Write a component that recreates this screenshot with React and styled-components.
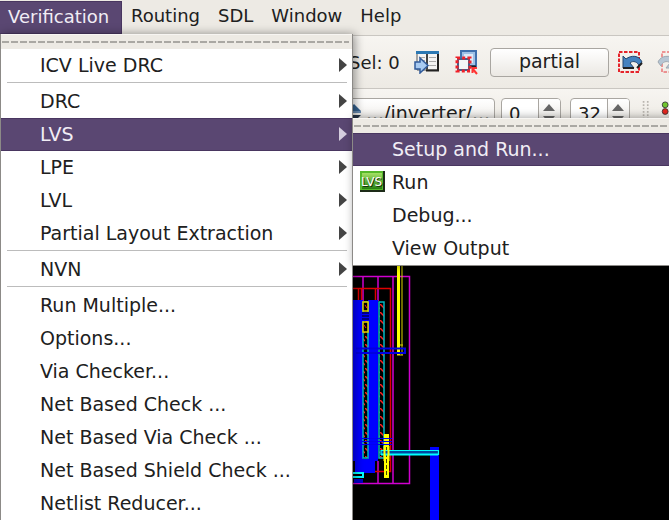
import React from "react";
import styled, { createGlobalStyle, css } from "styled-components";

const GlobalStyle = createGlobalStyle`
  * { box-sizing: border-box; }
  html, body { margin: 0; height: 100%; overflow: hidden; }
  body, button, input {
    font-family: "DejaVu Sans", sans-serif;
    font-size: 19px;
    color: #202020;
  }
`;

const purple = "#5a4772";

const Shell = styled.div`
  display: flex;
  flex-direction: column;
  height: 100vh;
  overflow: hidden;
  background: #edeae4;
`;

const MenuBar = styled.nav`
  position: relative;
  z-index: 2;
  display: flex;
  flex: none;
  height: 35px;
  padding-top: 1px;
  background: #edeae4;
`;

const MenuTitle = styled.button`
  height: 33px;
  padding: 0 9px 4px;
  border: 0;
  background: transparent;
  font-size: 18px;
  text-align: left;

  ${(p) =>
    p.$open &&
    css`
      min-width: 122px;
      padding: 0 8px 3px;
      border: 1px solid #493660;
      border-left: 0;
      background: ${purple};
      color: #f1edf5;
    `}
`;

const popup = css`
  position: absolute;
  margin: 0;
  padding: 0;
  list-style: none;
  background: #fff;
  border: 1px solid #8c8a87;
  border-top: 0;
  box-shadow: 2px 0 9px rgba(0, 0, 0, 0.4);
`;

const Menu = styled.ul`
  ${popup}
  top: 34px;
  left: 0;
  width: 353px;
`;

const SubMenu = styled.ul`
  ${popup}
  top: 0;
  left: 100%;
  width: 330px;
  z-index: 1;
`;

const TearOff = styled.li`
  display: flex;
  align-items: center;
  height: 15px;
  padding: 0 3px 0 1px;
  background: #edeae4;
  border-top: 1px solid #f7f5f2;

  &::before {
    content: "";
    flex: 1;
    height: 2px;
    background: repeating-linear-gradient(90deg, #aaa8a3 0 7px, #edeae4 7px 9px);
  }
`;

const Entry = styled.li`
  position: relative;
  height: 33px;
`;

const EntryButton = styled.button`
  display: flex;
  align-items: center;
  width: 100%;
  height: 33px;
  padding: 0 5px 2px 7px;
  border: 1px solid ${(p) => (p.$active ? "#493660" : "transparent")};
  border-width: 1px 0;
  background: ${(p) => (p.$active ? purple : "transparent")};
  color: ${(p) => (p.$active ? "#f1edf5" : "#202020")};
  text-align: left;
  white-space: nowrap;
`;

const IconSlot = styled.span`
  display: flex;
  width: 32px;
  flex: none;
`;

const Label = styled.span`
  flex: 1;
`;

const Separator = styled.li`
  height: 3px;
  margin: 0 5px 0 6px;
  border-top: 1px solid #bcbcbc;
`;

const ToolBar = styled.div`
  display: flex;
  flex: none;
  align-items: ${(p) => (p.$second ? "flex-start" : "center")};
  height: ${(p) => (p.$second ? "37px" : "53px")};
  padding: ${(p) => (p.$second ? "9px 0 0 346px" : "0 0 0 349px")};
  border-top: 1px solid #c9c6c1;
  background: linear-gradient(#f7f5f1, #edeae4);
  white-space: nowrap;
  overflow: hidden;
`;

const Selection = styled.span`
  width: 65px;
  flex: none;
  font-size: 18px;
`;

const ToolButton = styled.button`
  display: flex;
  flex: none;
  width: ${(p) => p.$width};
  padding: 0;
  border: 0;
  background: transparent;
`;

const PushButton = styled.button`
  flex: none;
  width: 119px;
  height: 29px;
  margin-right: 9px;
  padding: 0 0 2px;
  border: 1px solid #a9a6a1;
  border-radius: 4px;
  background: linear-gradient(#fff, #ebe8e3);
`;

const PathButton = styled.button`
  display: flex;
  align-items: center;
  flex: none;
  width: 149px;
  height: 30px;
  margin-right: 6px;
  padding: 0 0 0 3px;
  gap: 5px;
  border: 1px solid #a9a6a1;
  border-radius: 4px;
  background: linear-gradient(#fff, #ebe8e3);
`;

const Spin = styled.label`
  display: flex;
  flex: none;
  width: 60px;
  height: 30px;
  margin-right: 9px;
  border: 1px solid #a9a6a1;
  border-radius: 4px;
  background: #fff;
  overflow: hidden;
`;

const SpinInput = styled.input`
  width: 36px;
  height: 28px;
  padding: 0 0 0 7px;
  border: 0;
  background: transparent;
  font-size: 18px;
`;

const SpinButton = styled.button`
  display: flex;
  justify-content: center;
  flex: 1;
  padding: 4px 2px 0 0;
  border: 0;
  border-left: 1px solid #a9a6a1;
  background: linear-gradient(#fff, #e6e3de);
`;

const Canvas = styled.main`
  flex: 1;
  min-height: 0;
  background: #000;
  overflow: hidden;
`;

const Drawing = styled.svg`
  display: block;
`;

const Arrow = ({ light }) => (
  <svg width="8" height="14" viewBox="0 0 8 14" aria-hidden="true">
    <path d="M0 0 8 7 0 14Z" fill={light ? "#d5cede" : "#444"} />
  </svg>
);

const LvsIcon = () => (
  <svg width="25" height="21" viewBox="0 0 25 21" aria-hidden="true">
    <defs>
      <linearGradient id="lvs" x2="0" y2="1">
        <stop stopColor="#a4e065" />
        <stop offset="1" stopColor="#287f12" />
      </linearGradient>
    </defs>
    <path d="M0 0H25V21H0Z" fill="#1d2b18" />
    <path d="M0 0H23V19H0Z" fill="#55b82b" />
    <path d="M2 2H22V18H2Z" fill="url(#lvs)" />
    <text x="2" y="16" fontSize="12" fill="#123508">LVS</text>
    <text x="1" y="15" fontSize="12" fill="#fff">LVS</text>
  </svg>
);

const TableIcon = () => (
  <svg width="26" height="24" viewBox="0 0 26 24" aria-hidden="true">
    <path d="M3 2H24V20H3Z" fill="#f4f4f4" stroke="#555" strokeWidth="1" />
    <path d="M24 3V20.500H12" fill="none" stroke="#222" strokeWidth="2" />
    <path d="M2 1H25V4H2Z" fill="#2b78b4" />
    <path d="M13 4V20" stroke="#444" strokeWidth="2" />
    <path d="M5 7.5H11M5 10.5H11M15 7.5H22M15 11.5H22M15 15.5H22" stroke="#aaa" />
    <path d="M1 12H6V8L14 15.500 6 23V19H1Z" fill="#a9cbf1" stroke="#315b9a" strokeWidth="1.500" />
  </svg>
);

const CopyIcon = () => (
  <svg width="24" height="25" viewBox="0 0 24 25" aria-hidden="true">
    <path d="M6 1H21V16H6Z" fill="#9fc1e6" stroke="#3f70ae" strokeWidth="2" />
    <path d="M9 4H18V13H9Z" fill="#dce9f7" />
    <path d="M21 16.500H13" stroke="#222" strokeWidth="2" />
    <path d="M3 9H14V20H3Z" fill="#f4f5f7" stroke="#41618f" strokeWidth="2" />
    <path d="M2 8H15V21H2Z" fill="none" stroke="#f02028" strokeWidth="3" strokeDasharray="3 2.200" />
    <path d="M17 18H22M17.500 18V23M17 18 22 24" fill="none" stroke="#f33" strokeWidth="2" />
  </svg>
);

const UndoIcon = () => (
  <svg width="26" height="23" viewBox="0 0 26 23" aria-hidden="true">
    <path d="M1 1H21V21H1Z" fill="none" stroke="#e5242b" strokeWidth="2" strokeDasharray="3.500 1.500" />
    <path d="M5 5 8 8C13 4 21 4 24 11L21 15C20 11 15 9 12 12L16 17H5Z" fill="#4582bf" stroke="#24466f" />
    <path d="M5 17H16M24 12 19 17" stroke="#222" strokeWidth="2" fill="none" />
  </svg>
);

const RedoIcon = () => (
  <svg width="25" height="23" viewBox="0 0 25 23" opacity=".45" aria-hidden="true">
    <path d="M5 1H25V21H5Z" fill="none" stroke="#e5242b" strokeWidth="2" strokeDasharray="3.500 1.500" />
    <path d="M22 5 18 8C13 4 4 4 1 11L4 15C5 11 10 9 13 12L9 17H22Z" fill="#6f94ba" stroke="#3b526b" />
  </svg>
);

const LayerIcon = () => (
  <svg width="11" height="19" viewBox="0 0 11 19" aria-hidden="true">
    <path d="M4 0 11 7H-3Z" fill="#35618f" />
    <path d="M-3 11H11L4 18Z" fill="#28384c" />
    <path d="M-3 7H11V9H-3Z" fill="#6a8db2" />
  </svg>
);

const GripIcon = () => (
  <svg width="26" height="26" viewBox="0 0 26 26" aria-hidden="true">
    <path d="M5.500 1V26M10.500 1V26" stroke="#b9b5af" strokeWidth="2" strokeDasharray="2 2" />
  </svg>
);

const LightsIcon = () => (
  <svg width="10" height="22" viewBox="0 0 10 22" aria-hidden="true">
    <circle cx="5" cy="6" r="3.500" fill="#70c52e" stroke="#333" />
    <circle cx="5" cy="14" r="3.500" fill="#e5261f" stroke="#333" />
  </svg>
);

function LayoutDrawing() {
  return (
    <Drawing width="669" height="395" viewBox="0 125 669 395" role="img" aria-label="Inverter layout">
      <defs>
        <pattern id="hatch" width="5" height="8" patternUnits="userSpaceOnUse">
          <rect width="5" height="8" fill="#000" />
          <path d="M0 0 5 5" stroke="#ff2020" strokeWidth="1.500" />
        </pattern>
      </defs>
      <path d="M340 276.500H409.500V483.500H340M363 276V301M378 276V301M378 461V483M393 276V483" fill="none" stroke="#d000d0" strokeWidth="1.500" />
      <path d="M340 288.500H390.500V471.500H373M358.500 288V301M361.500 288V301M375.500 288V301" fill="none" stroke="#df0000" strokeWidth="1.500" />
      <g fill="#00f">
        <rect x="340" y="300" width="23" height="161" />
        <rect x="368" y="300" width="10" height="161" />
        <rect x="355" y="459" width="20" height="14" />
      </g>
      <g fill="url(#hatch)" stroke="#00b9c5" strokeWidth="1.500">
        <rect x="363" y="302" width="5" height="156" />
        <rect x="379" y="302" width="5" height="156" />
      </g>
      <g fill="#000" stroke="#e5d000" strokeWidth="1.500">
        <rect x="363" y="302" width="5" height="9" />
        <rect x="363" y="322" width="5" height="10" />
      </g>
      <path d="M365 305 367 308M364 325 366 328" stroke="#f22" />
      <path d="M362 312H369V321H362Z" fill="#000080" />
      <path d="M362 314.500H369M362 317.500H369M362 320.500H369" stroke="#00f" />
      <path d="M397 250H400V355H397Z" fill="#ff0" />
      <path d="M402 250V355M397 355H403M400 345H403" fill="none" stroke="#dad600" />
      <path d="M356 348.500H405V353H356" fill="none" stroke="#0000e0" strokeWidth="2" />
      <path d="M384 434H389V478H384Z" fill="#ff0" />
      <path d="M386.500 447V476" stroke="#444400" strokeDasharray="4 2" />
      <path d="M362 438.500H392M362 441.500H392M362 444.500H392" stroke="#0000f0" />
      <path d="M430 447H439V520H430Z" fill="#00f" />
      <path d="M381 450.500H438.500V454.500H381Z" fill="#0047a0" stroke="#00ffff" strokeWidth="1.200" />
      <path d="M381 454.500H438" stroke="#0ff" strokeWidth="2" />
      <path d="M384.500 446V461M388.500 446V461" stroke="#ff0" strokeWidth="2" />
      <path d="M340 473H363V477H340" fill="none" stroke="#0ff" strokeWidth="2" />
      <path d="M354 479H363V483H354Z" fill="#0000c8" />
    </Drawing>
  );
}

function MenuEntry({ label, active, arrow, icon, children }) {
  return (
    <Entry>
      <EntryButton $active={active} aria-haspopup={arrow ? "menu" : undefined}>
        <IconSlot>{icon}</IconSlot>
        <Label>{label}</Label>
        {arrow && <Arrow light={active} />}
      </EntryButton>
      {children}
    </Entry>
  );
}

function SpinBox({ value, label }) {
  return (
    <Spin>
      <SpinInput aria-label={label} defaultValue={value} />
      <SpinButton aria-label={`Increase ${label}`}>
        <svg width="12" height="20" viewBox="0 0 12 20" aria-hidden="true">
          <path d="M0 8 6 1 12 8Z" fill="#666" />
          <path d="M0 13H12L6 20Z" fill="#666" />
        </svg>
      </SpinButton>
    </Spin>
  );
}

export default function App() {
  return (
    <>
      <GlobalStyle />
      <Shell>
        <MenuBar>
          <MenuTitle $open aria-expanded="true">Verification</MenuTitle>
          {["Routing", "SDL", "Window", "Help"].map((title) => (
            <MenuTitle key={title}>{title}</MenuTitle>
          ))}
          <Menu>
            <TearOff />
            <MenuEntry label="ICV Live DRC" arrow />
            <Separator />
            <MenuEntry label="DRC" arrow />
            <MenuEntry label="LVS" arrow active>
              <SubMenu>
                <TearOff />
                <MenuEntry label="Setup and Run..." active />
                <MenuEntry label="Run" icon={<LvsIcon />} />
                <MenuEntry label="Debug..." />
                <MenuEntry label="View Output" />
              </SubMenu>
            </MenuEntry>
            <MenuEntry label="LPE" arrow />
            <MenuEntry label="LVL" arrow />
            <MenuEntry label="Partial Layout Extraction" arrow />
            <Separator />
            <MenuEntry label="NVN" arrow />
            <Separator />
            <MenuEntry label="Run Multiple..." />
            <MenuEntry label="Options..." />
            <MenuEntry label="Via Checker..." />
            <MenuEntry label="Net Based Check ..." />
            <MenuEntry label="Net Based Via Check ..." />
            <MenuEntry label="Net Based Shield Check ..." />
            <MenuEntry label="Netlist Reducer..." />
          </Menu>
        </MenuBar>
        <ToolBar>
          <Selection>Sel: 0</Selection>
          <ToolButton $width="41px" aria-label="Show table"><TableIcon /></ToolButton>
          <ToolButton $width="35px" aria-label="Copy selection"><CopyIcon /></ToolButton>
          <PushButton>partial</PushButton>
          <ToolButton $width="39px" aria-label="Undo selection"><UndoIcon /></ToolButton>
          <ToolButton $width="25px" aria-label="Redo selection"><RedoIcon /></ToolButton>
        </ToolBar>
        <ToolBar $second>
          <PathButton><LayerIcon />.../inverter/...</PathButton>
          <SpinBox value="0" label="start level" />
          <SpinBox value="32" label="stop level" />
          <GripIcon />
          <LightsIcon />
        </ToolBar>
        <Canvas><LayoutDrawing /></Canvas>
      </Shell>
    </>
  );
}
